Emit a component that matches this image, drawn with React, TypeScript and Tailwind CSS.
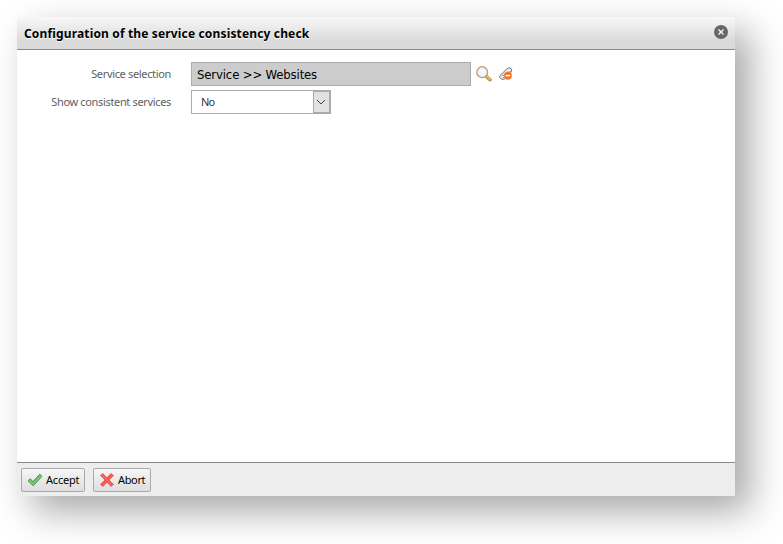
import React from "react";

function SearchIcon() {
  return (
    <svg width="16" height="16" viewBox="0 0 16 16" fill="none">
      <path d="M11 11 14 13.8" stroke="#b98544" strokeWidth="3.4" strokeLinecap="round" />
      <path d="M11.2 10.8 14 13.4" stroke="#edc47c" strokeWidth="1.5" strokeLinecap="round" />
      <circle cx="6.2" cy="6.2" r="5.4" fill="#f3f8fc" stroke="#c99b60" strokeWidth="1.4" />
      <circle cx="6.2" cy="6.2" r="4.3" stroke="#dbe4ee" strokeWidth=".8" />
    </svg>
  );
}

function DetachIcon() {
  return (
    <svg width="16" height="16" viewBox="0 0 16 16" fill="none">
      <path d="M2 9.4 8.8 3Q10.6 1 12.6 2 14.6 3.6 13.2 6L7.5 12.4Q5.5 14.2 3.2 13 .8 11.2 2 9.4Z" fill="#e8e8e8" stroke="#777" />
      <path d="M4 11.3 11.6 4.2" stroke="#fff" strokeWidth="1.4" />
      <path d="M5 12 12.4 5M4.2 9.2Q6 9 6.6 10.6" stroke="#777" strokeWidth=".9" />
      <circle cx="9.9" cy="9.6" r="3.9" fill="#ee6a1c" stroke="#f39b62" strokeWidth=".7" />
      <path d="M7.6 9.6h4.6" stroke="#fff" strokeWidth="1.7" />
    </svg>
  );
}

function CheckIcon() {
  return (
    <svg width="16" height="16" viewBox="0 0 16 16">
      <path d="M1 8.8 3.2 6.7 6 9.6 12.7 2.2 15 4.3 6.3 13.8Z" fill="#6fbd68" stroke="#46924a" strokeWidth=".9" strokeLinejoin="round" />
      <path d="M2.4 8.7 6.1 12.1 13.7 4.2" fill="none" stroke="#91d288" strokeWidth=".8" />
    </svg>
  );
}

function CrossIcon() {
  return (
    <svg width="16" height="16" viewBox="0 0 16 16">
      <path d="M3.6 1.6Q6 3.6 8 6.1 9.8 3.4 12.2 1.6L14.4 3.8Q11.8 5.6 10.1 8 11.8 10.4 14.4 12.2L12.2 14.4Q9.8 12.4 8 9.9 6.2 12.4 3.8 14.4L1.6 12.2Q4.2 10.4 5.9 8 4.2 5.6 1.6 3.8Z" fill="#fb5858" stroke="#e84848" strokeWidth=".9" strokeLinejoin="round" />
      <path d="M3.5 3.8 12.2 12.3" stroke="#ff8585" strokeWidth=".8" />
    </svg>
  );
}

function ToolButton({ icon, label, className }: { icon: React.ReactNode; label: string; className: string }) {
  return (
    <button className={`flex h-6 items-center gap-[3px] rounded-[2px] border border-[#aaa] bg-linear-to-b from-[#f6f6f6] to-[#dedede] pl-[5px] font-['Noto_Sans',sans-serif] text-[11px] whitespace-nowrap text-black ${className}`}>
      {icon}
      <span>{label}</span>
    </button>
  );
}

export default function App() {
  return (
    <div className="h-[544px] w-[783px] overflow-hidden bg-white pt-[17px] pl-[17px]">
      <section className="flex h-[479px] w-[718px] flex-col bg-white shadow-[15px_15px_35px_rgba(0,0,0,0.35)]">
        <header className="flex h-[33px] items-center justify-between border-b border-[#888] bg-linear-to-b from-[#f8f8f8] to-[#dadada] to-75% pr-[7px] pl-[7px]">
          <h1 className="mt-px font-['Noto_Sans',sans-serif] text-[12px] font-bold tracking-[0.15px] whitespace-nowrap text-black [text-shadow:0_1px_0_#fff]">
            Configuration of the service consistency check
          </h1>
          <button aria-label="Close" className="-mt-[3px]">
            <svg width="14" height="14" viewBox="0 0 14 14">
              <circle cx="7" cy="7" r="7" fill="#666864" />
              <path d="m4.5 4.5 5 5m0-5-5 5" stroke="#fff" strokeWidth="1.2" />
            </svg>
          </button>
        </header>
        <main className="flex flex-1 flex-col gap-1 pt-3 font-['Noto_Sans',sans-serif] text-[11px] text-[#606060]">
          <div className="flex h-6 items-center">
            <span className="w-[154px] text-right tracking-[-0.34px] whitespace-nowrap">Service selection</span>
            <div className="ml-5 flex h-6 w-[280px] items-center border border-[#aaa] bg-[#ccc] pt-px pl-[5px] font-['DejaVu_Sans_Condensed','DejaVu_Sans',sans-serif] text-[13px] tracking-[-0.15px] whitespace-nowrap text-black">
              <span>Service &gt;&gt; Websites</span>
            </div>
            <div className="ml-[5px] flex gap-[6px]">
              <SearchIcon />
              <DetachIcon />
            </div>
          </div>
          <div className="flex h-6 items-center">
            <span className="w-[154px] text-right tracking-[-0.34px] whitespace-nowrap">Show consistent services</span>
            <div className="ml-5 flex h-6 w-[140px] items-center justify-between border border-[#aaa] bg-white pl-[9px] text-[#333]">
              <span className="tracking-[-0.8px]">No</span>
              <span className="flex h-[22px] w-[17px] items-center justify-start border border-[#aaa] bg-[#e1e1e1] pl-[2px]">
                <svg width="10" height="6" viewBox="0 0 10 6" fill="none" stroke="#444">
                  <path d="m1 1 4 4 4-4" />
                </svg>
              </span>
            </div>
          </div>
        </main>
        <footer className="flex h-[34px] gap-2 border-t border-[#888] bg-[#ededed] pt-[5px] pl-1">
          <ToolButton icon={<CheckIcon />} label="Accept" className="w-16 tracking-[-0.2px]" />
          <ToolButton icon={<CrossIcon />} label="Abort" className="w-[58px] tracking-[-0.35px]" />
        </footer>
      </section>
    </div>
  );
}
